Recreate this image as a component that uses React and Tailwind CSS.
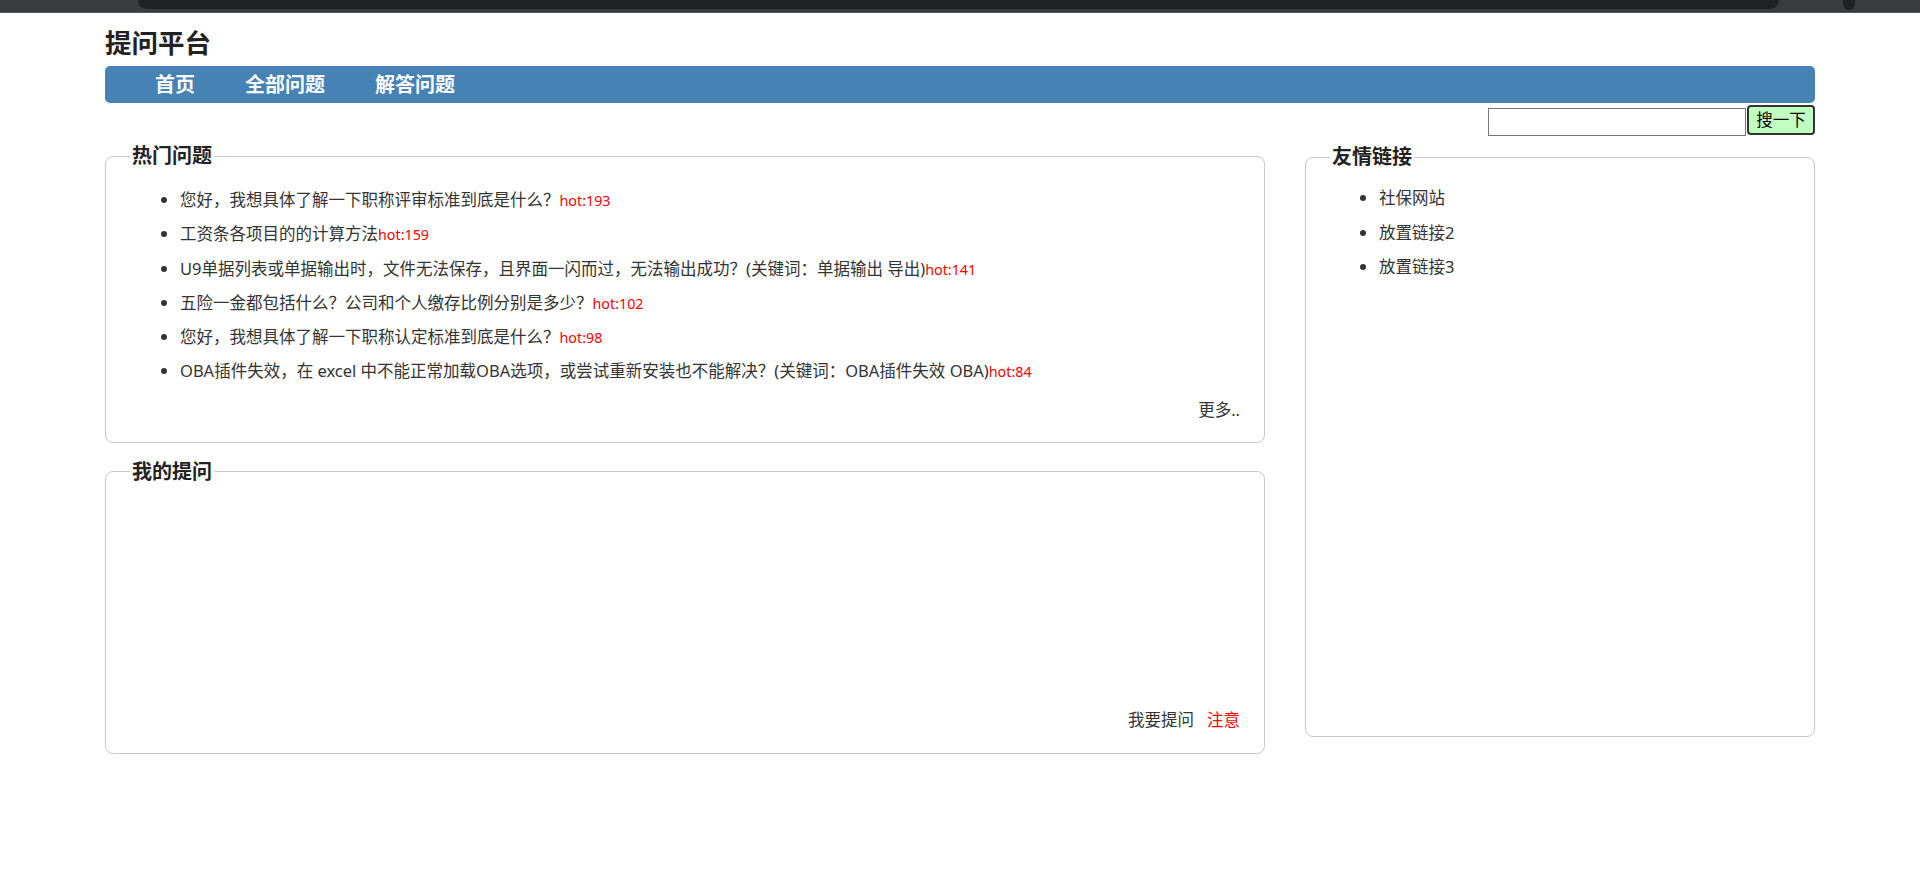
import React from 'react';

const hotQuestions = [
  { title: '您好，我想具体了解一下职称评审标准到底是什么？', hot: 193 },
  { title: '工资条各项目的的计算方法', hot: 159 },
  { title: 'U9单据列表或单据输出时，文件无法保存，且界面一闪而过，无法输出成功？(关键词：单据输出 导出)', hot: 141 },
  { title: '五险一金都包括什么？公司和个人缴存比例分别是多少？', hot: 102 },
  { title: '您好，我想具体了解一下职称认定标准到底是什么？', hot: 98 },
  { title: 'OBA插件失效，在 excel 中不能正常加载OBA选项，或尝试重新安装也不能解决？(关键词：OBA插件失效 OBA)', hot: 84 },
];

const links = ['社保网站', '放置链接2', '放置链接3'];

const navItems = ['首页', '全部问题', '解答问题'];

const App = () => {
  return (
    <div className="min-h-[870px] bg-white font-['Noto_Sans','Noto_Sans_CJK_SC',sans-serif] text-[#333]">
      {/* browser chrome strip */}
      <div className="h-[13px] bg-[#3a3b3e] border-b border-[#56575b] flex items-start">
        <div className="ml-[138px] w-[1641px] h-[9px] bg-[#202124] rounded-b-[10px]" />
        <div className="ml-[64px] w-[12px] h-[10px] rounded-b-full bg-[#202124]" />
      </div>

      <div className="w-[1710px] mx-auto">
        <h1 className="mt-[13px] h-[34px] text-[26.5px] leading-[34px] font-bold text-[#222]">提问平台</h1>

        {/* nav */}
        <nav className="mt-[6px] h-[37px] rounded-[5px] bg-[#4682b4] flex items-center pl-[25px]">
          {navItems.map((item) => (
            <a key={item} className="px-[25px] text-[20px] leading-[37px] font-bold text-white cursor-pointer">
              {item}
            </a>
          ))}
        </nav>

        {/* search */}
        <div className="mt-[2px] flex justify-end items-start">
          <input
            type="text"
            className="mt-[3px] h-[28px] w-[258px] border border-[#767676] bg-white px-1 text-[15px] outline-none"
          />
          <button className="ml-[1px] h-[30px] w-[68px] rounded-[4px] border-2 border-[#333] bg-[#c1ffc1] text-[16.5px] leading-[26px] text-black">
            搜一下
          </button>
        </div>

        <div className="mt-[7px] flex gap-[40px] items-start">
          {/* left column */}
          <div className="w-[1160px] flex flex-col">
            <fieldset className="border border-[#c8c8c8] rounded-[8px] px-[24px] pb-[15px]">
              <legend className="px-[2px] text-[20px] leading-[26px] font-bold text-[#222]">热门问题</legend>
              <ul className="mt-[14px] list-disc pl-[50px] text-[16.5px]">
                {hotQuestions.map((q) => (
                  <li key={q.hot} className="h-[34.3px] leading-[34.3px]">
                    {q.title}
                    <span className="text-[14.3px] leading-none text-[#ff0000]">hot:{q.hot}</span>
                  </li>
                ))}
              </ul>
              <div className="mt-[4px] text-right text-[16.5px] leading-[34px]">更多..</div>
            </fieldset>

            <fieldset className="mt-[16px] border border-[#c8c8c8] rounded-[8px] px-[24px] pb-[16px]">
              <legend className="px-[2px] text-[20px] leading-[26px] font-bold text-[#222]">我的提问</legend>
              <div className="h-[218px]" />
              <div className="text-right text-[16.5px] leading-[34px]">
                <a className="cursor-pointer">我要提问</a>
                <a className="ml-[13px] text-[#ff0000] cursor-pointer">注意</a>
              </div>
            </fieldset>
          </div>

          {/* right column */}
          <fieldset className="mt-[1px] w-[510px] h-[593px] border border-[#c8c8c8] rounded-[8px] px-[24px]">
            <legend className="px-[2px] text-[20px] leading-[26px] font-bold text-[#222]">友情链接</legend>
            <ul className="mt-[11px] list-disc pl-[49px] text-[16.5px]">
              {links.map((link) => (
                <li key={link} className="leading-[34.5px]">
                  <a className="cursor-pointer">{link}</a>
                </li>
              ))}
            </ul>
          </fieldset>
        </div>
      </div>
    </div>
  );
};

export default App;
